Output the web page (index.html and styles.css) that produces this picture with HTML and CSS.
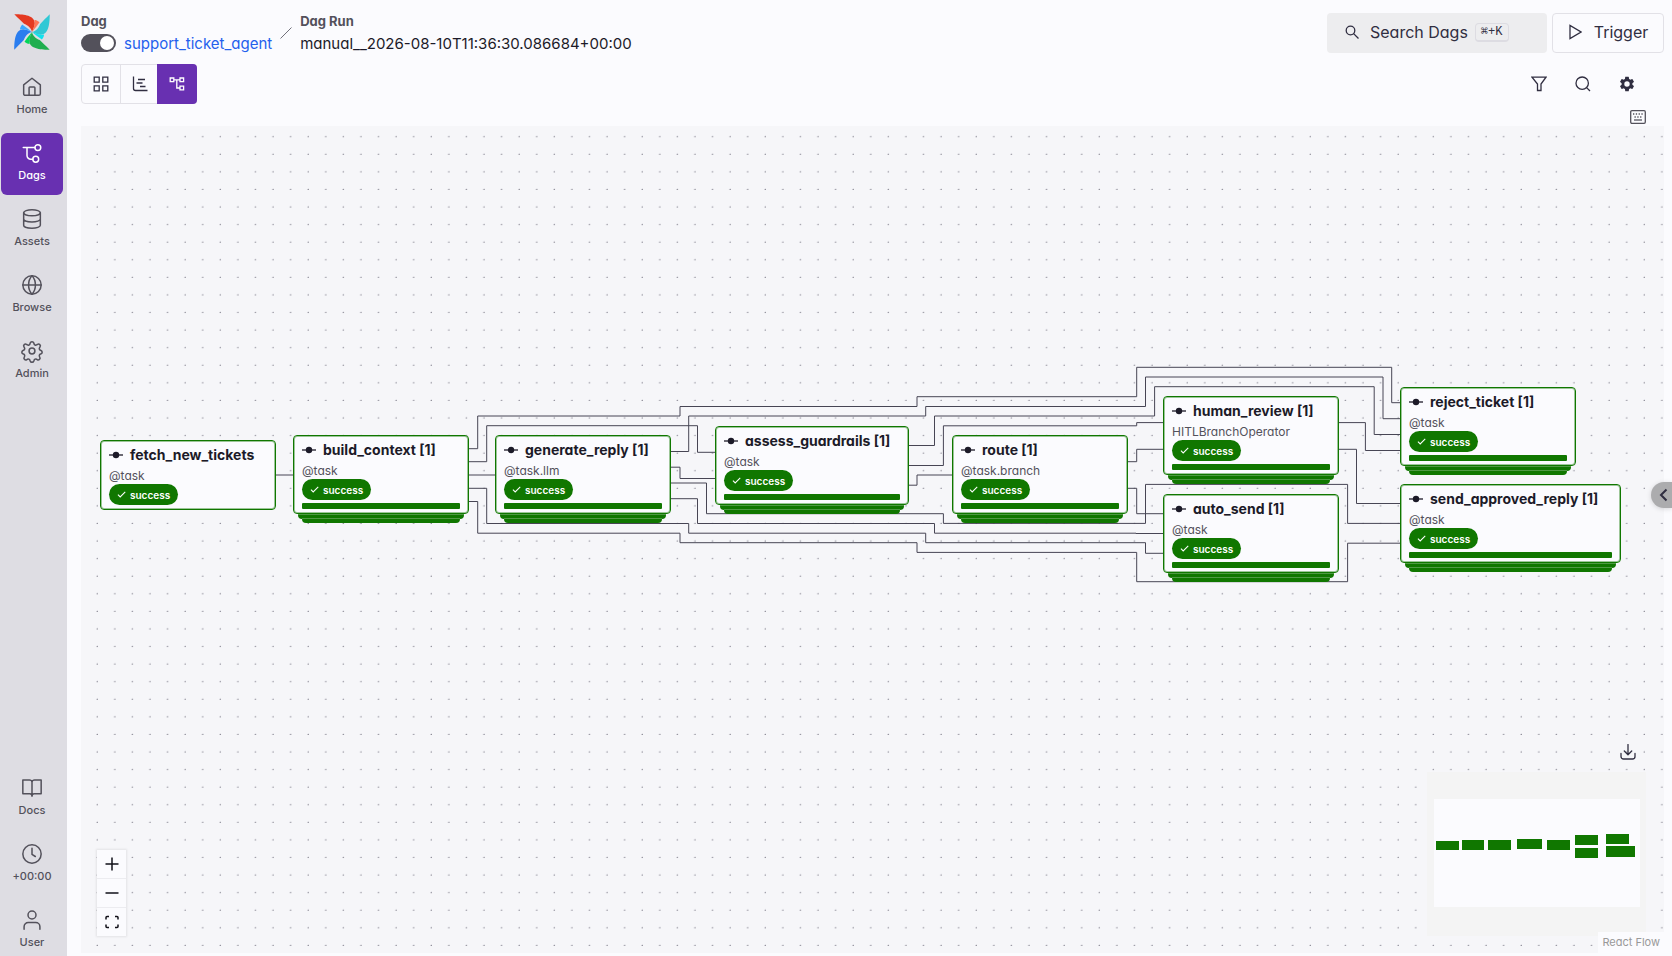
FILE: index.html
```html
<!DOCTYPE html>
<html lang="en">
<head>
<meta charset="utf-8">
<title>support_ticket_agent - Airflow</title>
<link rel="stylesheet" href="styles.css">
</head>
<body>
<svg class="defs" aria-hidden="true">
  <symbol id="op" viewBox="0 0 14 14"><path d="M0 7h14" stroke="currentColor" stroke-width="1.3"/><circle cx="7" cy="7" r="3.2" fill="currentColor"/></symbol>
  <symbol id="tick" viewBox="0 0 24 24"><path d="M2.500 12.500l6 6L22 5" fill="none" stroke="currentColor" stroke-width="2.800"/></symbol>
</svg>
<div class="app">
  <nav class="sidebar">
    <a class="logo" href="#" aria-label="Airflow">
      <svg viewBox="0 0 36 36">
        <g><path d="M.3.3C9 .2 21 1.200 20.800 9.500C20.600 12.500 19 15.500 18 18C17 12.500 11.500 10.500 10 9.800C7 7 4 4 .3.3z" fill="#e43921"/><path d="M18 18C21 14.500 24 10.500 25.500 8.200C23.500 6.500 22 6 20.400 6C21.300 10 20 13 18 18z" fill="#ff7557"/></g>
        <g transform="rotate(90 18 18)"><path d="M.3.3C9 .2 21 1.200 20.800 9.500C20.600 12.500 19 15.500 18 18C17 12.500 11.500 10.500 10 9.800C7 7 4 4 .3.3z" fill="#31c8d5"/><path d="M18 18C21 14.500 24 10.500 25.500 8.200C23.500 6.500 22 6 20.400 6C21.300 10 20 13 18 18z" fill="#11e1ee"/></g>
        <g transform="rotate(180 18 18)"><path d="M.3.3C9 .2 21 1.200 20.800 9.500C20.600 12.500 19 15.500 18 18C17 12.500 11.500 10.500 10 9.800C7 7 4 4 .3.3z" fill="#20ae4f"/><path d="M18 18C21 14.500 24 10.500 25.500 8.200C23.500 6.500 22 6 20.400 6C21.300 10 20 13 18 18z" fill="#04d659"/></g>
        <g transform="rotate(270 18 18)"><path d="M.3.3C9 .2 21 1.200 20.800 9.500C20.600 12.500 19 15.500 18 18C17 12.500 11.500 10.500 10 9.800C7 7 4 4 .3.3z" fill="#2a7def"/><path d="M18 18C21 14.500 24 10.500 25.500 8.200C23.500 6.500 22 6 20.400 6C21.300 10 20 13 18 18z" fill="#3aa8ff"/></g>
      </svg>
    </a>
    <div class="nav-top">
      <a class="nav-item" href="#"><svg viewBox="0 0 24 24"><path d="M2 9.500L12 1.500l10 8V20a2 2 0 0 1-2 2H4a2 2 0 0 1-2-2z"/><path d="M8.500 22v-9a1 1 0 0 1 1-1h5a1 1 0 0 1 1 1v9"/></svg><span>Home</span></a>
      <a class="nav-item active" href="#"><svg viewBox="0 0 24 24"><path d="M1.500 5.500h14M6 5.500V15a4.500 4.500 0 0 0 4.500 4.500H13"/><circle cx="19" cy="5.500" r="3.500"/><circle cx="16.500" cy="19.500" r="3.500"/></svg><span>Dags</span></a>
      <a class="nav-item" href="#"><svg viewBox="0 0 24 24"><ellipse cx="12" cy="4.500" rx="10" ry="3.600"/><path d="M2 4.500v15c0 2 4.500 3.600 10 3.600s10-1.600 10-3.600v-15M2 12c0 2 4.500 3.600 10 3.600S22 14 22 12"/></svg><span>Assets</span></a>
      <a class="nav-item" href="#"><svg viewBox="0 0 24 24"><circle cx="12" cy="12" r="11"/><path d="M1 12h22M12 1c-5.500 6-5.500 16 0 22M12 1c5.500 6 5.500 16 0 22"/></svg><span>Browse</span></a>
      <a class="nav-item" href="#"><svg viewBox="0 0 24 24"><circle cx="12" cy="12" r="3.500"/><path d="M9.800 2.500a2.300 2.300 0 0 1 4.400 0l.3 1a2.100 2.100 0 0 0 3 1.200l.9-.5a2.200 2.200 0 0 1 3.100 3.100l-.5.9a2.100 2.100 0 0 0 1.200 3l.6.200a2.200 2.200 0 0 1 0 4.100l-.6.200a2.100 2.100 0 0 0-1.200 3l.3.600a2.200 2.200 0 0 1-3.100 3l-.7-.4a2.100 2.100 0 0 0-3 1.200l-.3.800a2.300 2.300 0 0 1-4.400 0l-.3-.8a2.100 2.100 0 0 0-3-1.200l-.7.400a2.200 2.200 0 0 1-3.100-3l.3-.6a2.100 2.100 0 0 0-1.200-3l-.6-.2a2.200 2.200 0 0 1 0-4.100l.6-.2a2.100 2.100 0 0 0 1.200-3l-.5-.9a2.200 2.200 0 0 1 3.100-3.100l.9.500a2.100 2.100 0 0 0 3-1.200z"/></svg><span>Admin</span></a>
    </div>
    <div class="nav-bottom">
      <a class="nav-item" href="#"><svg viewBox="0 0 24 24"><path d="M12 5c0-1.500-1.500-2.500-3-2.500H1V19h8.500c1.500 0 2.500 1 2.500 3M12 5c0-1.500 1.500-2.500 3-2.500h8V19h-8.500c-1.500 0-2.500 1-2.500 3zM12 5v17"/></svg><span>Docs</span></a>
      <button class="nav-item" type="button"><svg viewBox="0 0 24 24"><circle cx="12" cy="12" r="11"/><path d="M12 5v7.500l4 2.500"/></svg><span>+00:00</span></button>
      <button class="nav-item" type="button"><svg viewBox="0 0 24 24"><circle cx="12" cy="6" r="4.800"/><path d="M2.500 23v-3a5 5 0 0 1 5-5h9a5 5 0 0 1 5 5v3"/></svg><span>User</span></button>
    </div>
  </nav>

  <main class="main">
    <header class="header">
      <div class="crumbs">
        <div class="crumb">
          <label class="crumb-label" for="pause">Dag</label>
          <div class="crumb-row"><input class="switch" id="pause" type="checkbox" role="switch" checked><a class="dag-link" href="#">support_ticket_agent</a></div>
        </div>
        <svg class="slash" viewBox="0 0 12 12"><path d="M.5 11.500l11-11"/></svg>
        <div class="crumb">
          <span class="crumb-label">Dag Run</span>
          <div class="crumb-row">manual__2026-08-10T11:36:30.086684+00:00</div>
        </div>
      </div>
      <div class="actions">
        <button class="search-btn" type="button">
          <svg viewBox="0 0 14 14"><circle cx="5.500" cy="5.500" r="4.300"/><path d="M8.600 8.600L13.500 13.500"/></svg>
          <span>Search Dags</span><kbd>⌘+K</kbd>
        </button>
        <button class="trigger" type="button"><svg viewBox="0 0 14 16"><path d="M2 1.500v13L13 8z"/></svg><span>Trigger</span></button>
      </div>
    </header>

    <div class="toolbar">
      <div class="views">
        <button type="button" aria-label="Grid"><svg viewBox="0 0 16 16"><path d="M1.200 1.200h5v5h-5zM9.800 1.200h5v5h-5zM1.200 9.800h5v5h-5zM9.800 9.800h5v5h-5z"/></svg></button>
        <button type="button" aria-label="Gantt"><svg viewBox="0 0 16 16"><path d="M1.500.5v12a2 2 0 0 0 2 2h12M6 3.500h7M4.500 7h6M8 10.500h5.500"/></svg></button>
        <button class="on" type="button" aria-label="Graph"><svg viewBox="0 0 16 16"><path d="M1.200 2h3.600v3.600H1.200zM11 2h3.600v3.600H11zM11 10.200h3.600v3.600H11zM4.800 3.800H11M7.800 3.800v8.200H11"/></svg></button>
      </div>
      <div class="tools">
        <button type="button" aria-label="Filter"><svg viewBox="0 0 16 16"><path d="M1 1.200h14L10 8v6.500H6.500V8z"/></svg></button>
        <button type="button" aria-label="Search tasks"><svg viewBox="0 0 16 16"><circle cx="7.200" cy="7.200" r="6.200"/><path d="M11.600 11.600L15 15"/></svg></button>
        <button type="button" aria-label="Options"><svg class="solid" viewBox="0 0 24 24"><path fill-rule="evenodd" d="M19.140 12.940c.04-.3.060-.61.060-.94 0-.32-.02-.64-.07-.94l2.030-1.580a.49.490 0 0 0 .12-.61l-1.920-3.320a.488.488 0 0 0-.59-.22l-2.390.96c-.5-.38-1.030-.7-1.620-.94l-.36-2.540a.484.484 0 0 0-.48-.41h-3.840c-.24 0-.43.170-.47.410l-.36 2.540c-.59.240-1.130.570-1.620.940l-2.390-.96c-.22-.08-.47 0-.59.220L2.740 8.870c-.12.210-.08.470.12.610l2.030 1.580c-.05.300-.09.630-.09.940s.02.640.070.940l-2.030 1.580a.49.490 0 0 0-.12.610l1.920 3.320c.12.220.370.290.590.220l2.390-.96c.5.380 1.030.7 1.620.94l.36 2.540c.05.240.240.410.480.410h3.840c.24 0 .44-.17.470-.41l.36-2.540c.59-.24 1.130-.56 1.620-.94l2.390.96c.22.080.470 0 .59-.22l1.920-3.320a.49.490 0 0 0-.12-.61zM12 15.600a3.600 3.600 0 1 1 0-7.200 3.600 3.600 0 0 1 0 7.200z"/></svg></button>
      </div>
    </div>

    <div class="shortcut-row">
      <button type="button" aria-label="Keyboard shortcuts"><svg viewBox="0 0 16 14"><rect x=".7" y=".7" width="14.600" height="12.600" rx="1.200"/><path d="M3 4h10" stroke-dasharray="1.300 1.500"/><path d="M4.500 7h8" stroke-dasharray="1.300 1.500"/><path d="M4 10h8"/></svg></button>
    </div>

    <section class="canvas" aria-label="Dag graph">
      <svg class="edges" aria-hidden="true">
        <defs><pattern id="dots" x="7.200" y="1.500" width="17.580" height="17.580" patternUnits="userSpaceOnUse"><circle cx="9" cy="9" r=".55"/></pattern></defs>
        <rect width="100%" height="100%" fill="url(#dots)"/>
        <g class="lines" transform="translate(-81 -126)">
          <path d="M275 475H293"/>
          <path d="M468 448.700H477.700V416H680V406.500H917V396.700H1136.700V367.300H1391.700V402.700H1401"/>
          <path d="M671 451.500H688.700V416H925.700V406.500H1145.500V377H1383V418.700H1401"/>
          <path d="M468 461.700H486.700V425.700H697.500V452.300H716"/>
          <path d="M468 475H496"/>
          <path d="M468 488.300H486.700V523.500H688.700V533.200H925.700V542.700H1145.500V553.300H1164"/>
          <path d="M468 501.500H477.700V533.200H680V542.700H917V552.400H1136.700V581.700H1347.600V543.200H1401"/>
          <path d="M671 467.200H680V478.500H716"/>
          <path d="M671 483H706.500V513.700H943.400V523.400H1145.500V484.400H1347.600V523.400H1401"/>
          <path d="M671 498.700H697.500V523.500H934.500V533.200H1136V533.500H1164"/>
          <path d="M908 445.500H934.500V416H1154.600V386.700H1374.200V434.500H1401"/>
          <path d="M908 465.500H943.400V425.800H1136.700V422.600H1164"/>
          <path d="M908 485.200H917V475H953"/>
          <path d="M1127 461.700H1136.700V449.300H1164"/>
          <path d="M1127 488.300H1136.700V513.700H1164"/>
          <path d="M1338 422.600H1365.400V450.500H1401"/>
          <path d="M1338 449.300H1356.500V503.500H1401"/>
        </g>
      </svg>

      <article class="node fetch"><h3><svg><use href="#op"/></svg>fetch_new_tickets</h3><p>@task</p><span class="badge"><svg><use href="#tick"/></svg>success</span></article>
      <article class="node mapped build"><h3><svg><use href="#op"/></svg>build_context [1]</h3><p>@task</p><span class="badge"><svg><use href="#tick"/></svg>success</span><div class="bar"></div></article>
      <article class="node mapped generate"><h3><svg><use href="#op"/></svg>generate_reply [1]</h3><p>@task.llm</p><span class="badge"><svg><use href="#tick"/></svg>success</span><div class="bar"></div></article>
      <article class="node mapped assess"><h3><svg><use href="#op"/></svg>assess_guardrails [1]</h3><p>@task</p><span class="badge"><svg><use href="#tick"/></svg>success</span><div class="bar"></div></article>
      <article class="node mapped route"><h3><svg><use href="#op"/></svg>route [1]</h3><p>@task.branch</p><span class="badge"><svg><use href="#tick"/></svg>success</span><div class="bar"></div></article>
      <article class="node mapped human"><h3><svg><use href="#op"/></svg>human_review [1]</h3><p>HITLBranchOperator</p><span class="badge"><svg><use href="#tick"/></svg>success</span><div class="bar"></div></article>
      <article class="node mapped auto"><h3><svg><use href="#op"/></svg>auto_send [1]</h3><p>@task</p><span class="badge"><svg><use href="#tick"/></svg>success</span><div class="bar"></div></article>
      <article class="node mapped reject"><h3><svg><use href="#op"/></svg>reject_ticket [1]</h3><p>@task</p><span class="badge"><svg><use href="#tick"/></svg>success</span><div class="bar"></div></article>
      <article class="node mapped send"><h3><svg><use href="#op"/></svg>send_approved_reply [1]</h3><p>@task</p><span class="badge"><svg><use href="#tick"/></svg>success</span><div class="bar"></div></article>

      <div class="controls">
        <button type="button" aria-label="Zoom in"><svg viewBox="0 0 14 14"><path d="M7 .5v13M.5 7h13"/></svg></button>
        <button type="button" aria-label="Zoom out"><svg viewBox="0 0 14 14"><path d="M.5 7h13"/></svg></button>
        <button type="button" aria-label="Fit view"><svg viewBox="0 0 14 14"><path d="M1 4.500V2.500Q1 1.500 2 1.500H4M10 1.500h2q1 0 1 1v2M13 9.500v2q0 1-1 1h-2M4 12.500H2q-1 0-1-1v-2"/></svg></button>
      </div>

      <button class="download" type="button" aria-label="Download graph"><svg viewBox="0 0 16 16"><path d="M8 .5v10M4.300 7L8 10.700 11.700 7M1 9.500v3a2.500 2.500 0 0 0 2.500 2.500h9a2.500 2.500 0 0 0 2.500-2.500v-3"/></svg></button>

      <svg class="minimap" viewBox="0 0 219 164" role="img" aria-label="Mini map">
        <rect width="219" height="164" fill="#f4f4f4"/>
        <rect x="7" y="27" width="206" height="108" fill="#fbfbfe"/>
        <g fill="#107700"><rect x="9" y="69" width="23" height="9"/><rect x="35" y="68" width="22" height="10"/><rect x="61" y="68" width="23" height="10"/><rect x="90" y="67" width="25" height="10"/><rect x="120" y="68" width="23" height="10"/><rect x="148" y="63" width="23" height="10"/><rect x="148" y="76" width="23" height="10"/><rect x="179" y="62" width="23" height="10"/><rect x="179" y="74" width="29" height="11"/></g>
      </svg>
      <a class="credit" href="#">React Flow</a>
    </section>
  </main>
  <button class="drawer" type="button" aria-label="Open details"><svg viewBox="0 0 14 14"><path d="M9.500 1.500L4 7l5.500 5.500"/></svg></button>
</div>
</body>
</html>
```
FILE: styles.css
```css
* { box-sizing: border-box; }
body {
  margin: 0;
  font-family: Inter, "Liberation Sans", sans-serif;
  font-feature-settings: "cv11";
  font-size: 16px;
  color: #1c1a28;
  background: #fbfbfe;
}
button { font: inherit; font-feature-settings: inherit; color: inherit; background: none; border: 0; padding: 0; }
a { color: inherit; text-decoration: none; }
svg { display: block; fill: none; stroke: none; }
.defs { position: absolute; width: 0; height: 0; }
.app { display: flex; min-height: 100vh; position: relative; }

.sidebar {
  flex: none; width: 67px; background: #dedde3; color: #53515b;
  display: flex; flex-direction: column; align-items: flex-start;
  padding: 14px 4px 0 1px;
}
.logo { width: 36px; margin: 0 0 17px 13px; }
.logo svg { width: 36px; height: 36px; }
.nav-top, .nav-bottom { display: flex; flex-direction: column; gap: 4px; }
.nav-bottom { margin-top: auto; gap: 14px; }
.nav-item {
  width: 62px; height: 62px; border-radius: 6px; font-size: 11px; line-height: 16px; font-weight: 500; padding-bottom: 2px;
  display: flex; flex-direction: column; align-items: center; justify-content: center; gap: 4px;
}
.nav-bottom .nav-item { height: 52px; padding-bottom: 0; }
.nav-item svg { width: 20px; height: 20px; overflow: visible; stroke: currentColor; stroke-width: 1.800; stroke-linecap: round; stroke-linejoin: round; }
.nav-item.active { background: #6830b1; color: #fff; }

.main { flex: 1; min-width: 0; display: flex; flex-direction: column; padding: 13px 8px 3px 14px; }
.header { display: flex; justify-content: space-between; align-items: flex-start; }
.crumbs { display: flex; gap: 8px; }
.crumb-label { display: block; font-size: 13px; line-height: 16px; font-weight: 700; color: #53515b; }
.crumb-row { display: flex; align-items: center; gap: 8px; height: 28px; font-size: 15px; }
.dag-link { color: #2460ed; }
.slash { width: 12px; height: 12px; margin-top: 14px; stroke: #71707a; }
.switch {
  appearance: none; width: 35px; height: 18px; margin: 0; border-radius: 9px; background: #53515b;
  display: flex; align-items: center; justify-content: flex-end; padding: 2px;
}
.switch::before { content: ""; width: 14px; height: 14px; border-radius: 50%; background: #fff; }
.actions { display: flex; gap: 5px; color: #302e41; }
.search-btn, .trigger { height: 40px; border-radius: 4px; display: flex; align-items: center; }
.search-btn { width: 220px; padding: 0 18px 2px; background: #ededef; }
.search-btn svg { width: 14px; height: 14px; margin-right: 11px; stroke: currentColor; stroke-width: 1.300; }
kbd {
  font: 12px/16px "Liberation Mono", "DejaVu Sans Mono", monospace; color: #302e41;
  margin-left: 7px; padding: 0 5px; border: 1px solid #dddce2; border-bottom-width: 2px; border-radius: 4px;
}
.trigger { width: 112px; border: 1px solid #e2e1e7; justify-content: center; gap: 12px; padding-bottom: 2px; }
.trigger svg { width: 14px; height: 16px; stroke: currentColor; stroke-width: 1.300; }

.toolbar { display: flex; justify-content: space-between; align-items: center; margin-top: 7px; color: #302e41; }
.views { display: flex; height: 40px; width: 116px; border: 1px solid #e2e1e7; border-radius: 4px; }
.views button { flex: none; width: 38px; display: grid; place-items: center; }
.views button + button { border-left: 1px solid #e2e1e7; }
.views .on { width: 40px; background: #6830b1; color: #fff; margin: -1px; border-left: 0; border-radius: 0 4px 4px 0; }
.views svg, .tools svg { width: 16px; height: 16px; stroke: currentColor; stroke-width: 1.300; }
.tools { display: flex; gap: 28px; padding-right: 29px; }
.tools .solid { fill: currentColor; stroke: none; width: 18px; height: 18px; margin: -1px; }
.shortcut-row { height: 22px; display: flex; align-items: flex-end; justify-content: flex-end; padding: 0 18px 2px 0; }
.shortcut-row svg { width: 16px; height: 14px; stroke: #53515b; stroke-width: 1.300; }

.canvas { flex: 1; position: relative; overflow: hidden; background: #f6f6f9; isolation: isolate; }
.edges { position: absolute; inset: 0; width: 100%; height: 100%; z-index: -2; }
.edges pattern circle { fill: #302e41; }
.lines { stroke: #474554; stroke-width: 1; }
.node {
  position: absolute; width: 176px; padding: 5px 8px 4px; background: #fbfbfe;
  border: 1px solid #107700; border-radius: 4px; box-shadow: inset 0 0 0 1px #10770066;
}
.node h3 { margin: 0; display: flex; align-items: center; gap: 7px; font-size: 14px; line-height: 18px; font-weight: 700; white-space: nowrap; }
.node h3 svg { width: 14px; height: 14px; }
.node p { margin: 4px 0 0; font-size: 12px; line-height: 16px; color: #53515b; }
.badge {
  display: inline-flex; align-items: center; gap: 4px; vertical-align: top; height: 21px; padding: 0 8px;
  border-radius: 11px; background: #107700; color: #fff; font-size: 10px; font-weight: 600;
}
.badge svg { width: 9px; height: 9px; }
.bar { height: 6px; margin-top: 3px; border-radius: 1px; background: #107700; }
.mapped::before, .mapped::after {
  content: ""; position: absolute; z-index: -1; height: 4px; background: #107700; border-radius: 0 0 4px 4px; border-top: 1px solid #4f9944;
}
.mapped::before { left: 4px; right: 4px; top: calc(100% + 1px); }
.mapped::after { left: 8px; right: 8px; top: calc(100% + 5px); }
.fetch { left: 19px; top: 314px; }
.build { left: 212px; top: 309px; }
.generate { left: 414px; top: 309px; }
.assess { left: 634px; top: 300px; width: 194px; }
.route { left: 871px; top: 309px; }
.human { left: 1082px; top: 270px; }
.auto { left: 1082px; top: 368px; }
.reject { left: 1319px; top: 261px; }
.send { left: 1319px; top: 358px; width: 221px; }

.controls { position: absolute; left: 16px; bottom: 17px; width: 29px; background: #fbfbfe; box-shadow: 0 0 2px 1px #00000014; }
.controls button { width: 29px; height: 28px; display: grid; place-items: center; }
.controls button + button { height: 29px; border-top: 1px solid #ececf0; }
.controls svg { width: 14px; height: 14px; stroke: #111018; stroke-width: 1.500; }
.download { position: absolute; right: 28px; bottom: 193px; color: #302e41; }
.download svg { width: 16px; height: 16px; stroke: currentColor; stroke-width: 1.300; stroke-linecap: round; stroke-linejoin: round; }
.minimap { position: absolute; right: 18px; bottom: 17px; width: 219px; height: 164px; }
.credit { position: absolute; right: 0; bottom: 0; padding: 2px 4px; background: #fbfbfe; color: #999; font-size: 11px; line-height: 17px; }
.drawer {
  position: absolute; right: 0; top: 482px; width: 21px; height: 26px; padding-left: 6px; display: flex; align-items: center;
  background: #acacae; border-radius: 13px 0 0 13px; box-shadow: 0 1px 5px #00000026;
}
.drawer svg { width: 14px; height: 14px; stroke: #302e41; stroke-width: 2; }
```
